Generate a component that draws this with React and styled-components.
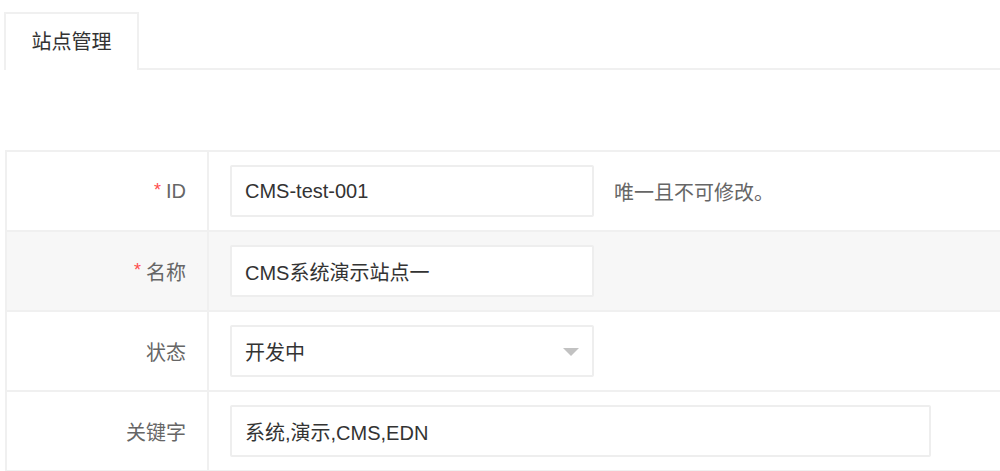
import React from "react";
import styled, { createGlobalStyle } from "styled-components";

const Global = createGlobalStyle`
  html, body { margin: 0; padding: 0; background: #fff; }
  body {
    font-family: "Liberation Sans", "Noto Sans CJK SC", Arial, sans-serif;
    font-size: 20px;
    color: #333;
  }
  * { box-sizing: border-box; }
`;

const Page = styled.div`
  width: 1000px;
  height: 471px;
  overflow: hidden;
  padding-top: 12px;
`;

const TabBar = styled.div`
  display: flex;
  align-items: stretch;
  height: 58px;
  padding-left: 4px;
`;

const Tab = styled.div`
  width: 135px;
  border: 2px solid #f0f0f0;
  border-bottom: none;
  background: #fff;
  display: flex;
  align-items: center;
  justify-content: center;
  font-size: 20px;
  color: #333;
  padding-bottom: 3px;
`;

const TabFill = styled.div`
  flex: 1;
  border-bottom: 2px solid #f0f0f0;
`;

const Form = styled.div`
  margin-top: 80px;
  margin-left: 5px;
  border-top: 2px solid #f0f0f0;
  border-left: 2px solid #f0f0f0;
`;

const Row = styled.div`
  display: grid;
  grid-template-columns: 202px 1fr;
  height: 80px;
  border-bottom: 2px solid #f0f0f0;
  background: ${(p) => (p.$shaded ? "#f7f7f7" : "#fff")};
`;

const Label = styled.div`
  display: flex;
  align-items: center;
  justify-content: flex-end;
  padding-right: 21px;
  border-right: 2px solid #f0f0f0;
  color: #666;
  font-size: 20px;
`;

const Star = styled.span`
  color: #ff4d4d;
  margin-right: 5px;
  font-size: 18px;
  position: relative;
  top: -1px;
`;

const Value = styled.div`
  display: flex;
  align-items: center;
  padding-left: 21px;
`;

const Input = styled.div`
  width: ${(p) => p.$w}px;
  height: 52px;
  border: 2px solid #eeeeee;
  border-radius: 2px;
  background: #fff;
  display: flex;
  align-items: center;
  justify-content: space-between;
  padding: 0 13px;
  color: #333;
  font-size: 20px;
  white-space: nowrap;
`;

const Arrow = styled.span`
  width: 0;
  height: 0;
  border-left: 8px solid transparent;
  border-right: 8px solid transparent;
  border-top: 8px solid #c2c2c2;
  margin-top: 2px;
`;

const Hint = styled.span`
  margin-left: 20px;
  color: #666;
  font-size: 20px;
`;

export default function App() {
  return (
    <>
      <Global />
      <Page>
        <TabBar>
          <Tab>站点管理</Tab>
          <TabFill />
        </TabBar>
        <Form>
          <Row>
            <Label>
              <Star>*</Star>ID
            </Label>
            <Value>
              <Input $w={364}>CMS-test-001</Input>
              <Hint>唯一且不可修改。</Hint>
            </Value>
          </Row>
          <Row $shaded>
            <Label>
              <Star>*</Star>名称
            </Label>
            <Value>
              <Input $w={364}>CMS系统演示站点一</Input>
            </Value>
          </Row>
          <Row>
            <Label>状态</Label>
            <Value>
              <Input $w={364}>
                开发中
                <Arrow />
              </Input>
            </Value>
          </Row>
          <Row>
            <Label>关键字</Label>
            <Value>
              <Input $w={701}>系统,演示,CMS,EDN</Input>
            </Value>
          </Row>
        </Form>
      </Page>
    </>
  );
}
